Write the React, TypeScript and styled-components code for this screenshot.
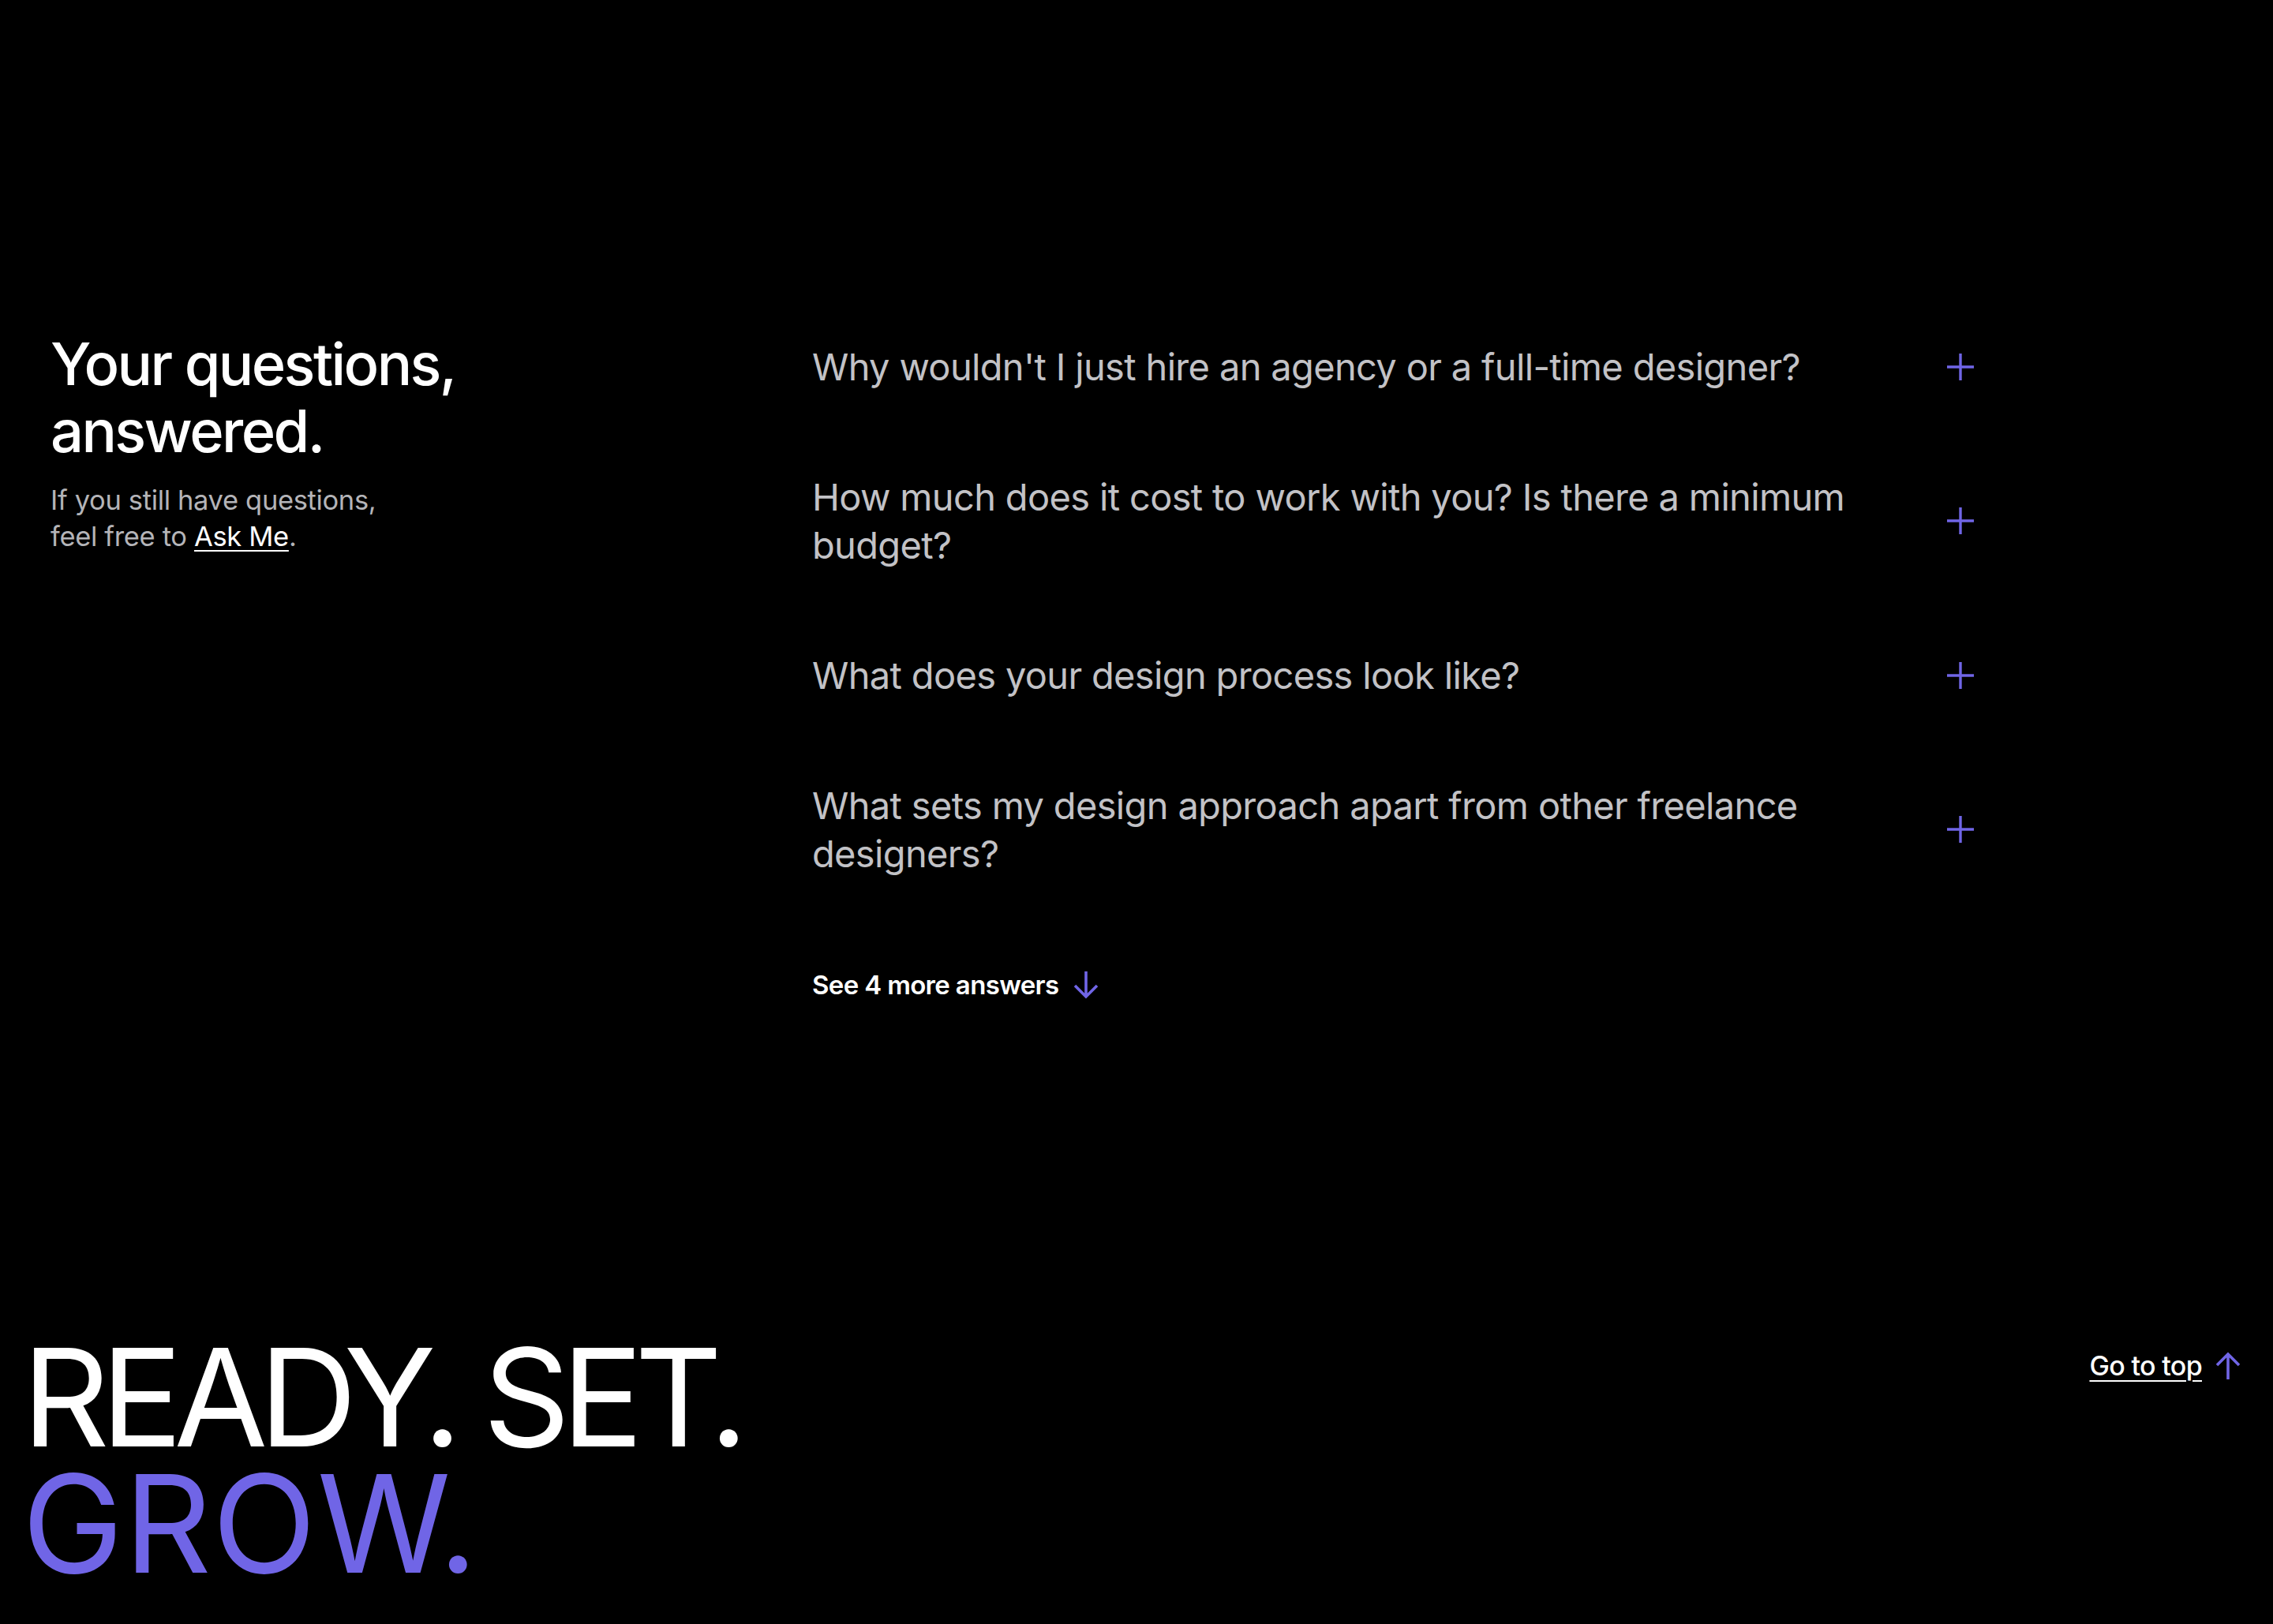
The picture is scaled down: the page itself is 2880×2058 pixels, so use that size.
import React from "react";
import styled, { createGlobalStyle } from "styled-components";

const PURPLE = "#7065e6";

const questions = [
  "Why wouldn't I just hire an agency or a full-time designer?",
  "How much does it cost to work with you? Is there a minimum budget?",
  "What does your design process look like?",
  "What sets my design approach apart from other freelance designers?",
];

function PlusIcon() {
  return (
    <svg width="36" height="36" viewBox="0 0 36 36" fill="none">
      <path d="M18 1v34M1 18h34" stroke={PURPLE} strokeWidth="3.4" />
    </svg>
  );
}

function Arrow({ up }: { up?: boolean }) {
  return (
    <svg width="34" height="36" viewBox="0 0 34 36" fill="none" style={up ? { transform: "rotate(180deg)" } : undefined}>
      <path d="M17 1v32M3 19l14 14 14-14" stroke={PURPLE} strokeWidth="3.6" />
    </svg>
  );
}

export default function App() {
  return (
    <>
      <GlobalStyle />
      <Page>
        <FaqSection>
          <Intro>
            <Heading>
              Your questions,
              <br />
              answered.
            </Heading>
            <Lead>
              If you still have questions,
              <br />
              feel free to <AskLink href="#">Ask Me</AskLink>.
            </Lead>
          </Intro>
          <FaqList>
            {questions.map((q) => (
              <FaqItem key={q}>
                <Question>{q}</Question>
                <Toggle aria-label="Expand">
                  <PlusIcon />
                </Toggle>
              </FaqItem>
            ))}
            <MoreButton>
              See 4 more answers
              <Arrow />
            </MoreButton>
          </FaqList>
        </FaqSection>
        <Footer>
          <Slogan>
            <SloganLine>READY. SET.</SloganLine>
            <SloganLine $accent>GROW.</SloganLine>
          </Slogan>
          <TopLink href="#">
            <span>Go to top</span>
            <Arrow up />
          </TopLink>
        </Footer>
      </Page>
    </>
  );
}

const GlobalStyle = createGlobalStyle`
  html, body {
    margin: 0;
    padding: 0;
    background: #000;
  }
  body {
    font-family: Inter, "Noto Sans", sans-serif;
    color: #fff;
    -webkit-font-smoothing: antialiased;
  }
  * {
    box-sizing: border-box;
  }
`;

const Page = styled.div`
  min-height: 100vh;
  display: flex;
  flex-direction: column;
`;

const FaqSection = styled.section`
  display: grid;
  grid-template-columns: 965px 1473px;
  padding: 419px 0 0 64px;
`;

const Intro = styled.div`
  display: flex;
  flex-direction: column;
`;

const Heading = styled.h2`
  margin: 0;
  font-size: 74px;
  line-height: 85px;
  font-weight: 500;
  letter-spacing: -0.035em;
  color: #fff;
`;

const Lead = styled.p`
  margin: 22px 0 0;
  font-size: 34.5px;
  line-height: 46px;
  letter-spacing: -0.01em;
  color: #b4b4b8;
`;

const AskLink = styled.a`
  color: #fff;
  text-decoration: underline;
  text-underline-offset: 5px;
  text-decoration-thickness: 2px;
`;

const FaqList = styled.div`
  display: flex;
  flex-direction: column;
  gap: 104px;
  padding-top: 15px;
`;

const FaqItem = styled.div`
  display: flex;
  align-items: center;
  justify-content: space-between;
`;

const Question = styled.h3`
  margin: 0;
  max-width: 1380px;
  font-size: 47px;
  line-height: 61px;
  font-weight: 400;
  letter-spacing: -0.014em;
  color: #c2c2c6;
`;

const Toggle = styled.button`
  display: flex;
  padding: 0;
  border: none;
  background: none;
  cursor: pointer;
`;

const MoreButton = styled.button`
  display: flex;
  align-items: center;
  gap: 18px;
  align-self: flex-start;
  margin-top: 12px;
  padding: 0;
  border: none;
  background: none;
  font-family: inherit;
  font-size: 33px;
  font-weight: 600;
  letter-spacing: -0.02em;
  color: #fff;
  cursor: pointer;
`;

const Footer = styled.footer`
  margin-top: auto;
  display: flex;
  justify-content: space-between;
  align-items: flex-start;
  padding: 0 40px 48px 28px;
`;

const Slogan = styled.h1`
  margin: 0;
  font-size: 172px;
  line-height: 160px;
  font-weight: 400;
  color: #fff;
`;

const SloganLine = styled.span<{ $accent?: boolean }>`
  display: block;
  height: 160px;
  letter-spacing: ${(p) => (p.$accent ? "0.006em" : "-0.063em")};
  color: ${(p) => (p.$accent ? PURPLE : "#fff")};
`;

const TopLink = styled.a`
  display: flex;
  align-items: center;
  gap: 16px;
  margin-top: 20px;
  font-size: 34px;
  font-weight: 500;
  letter-spacing: -0.02em;
  color: #fff;
  text-decoration: none;

  span {
    text-decoration: underline;
    text-underline-offset: 6px;
    text-decoration-thickness: 2px;
  }
`;
